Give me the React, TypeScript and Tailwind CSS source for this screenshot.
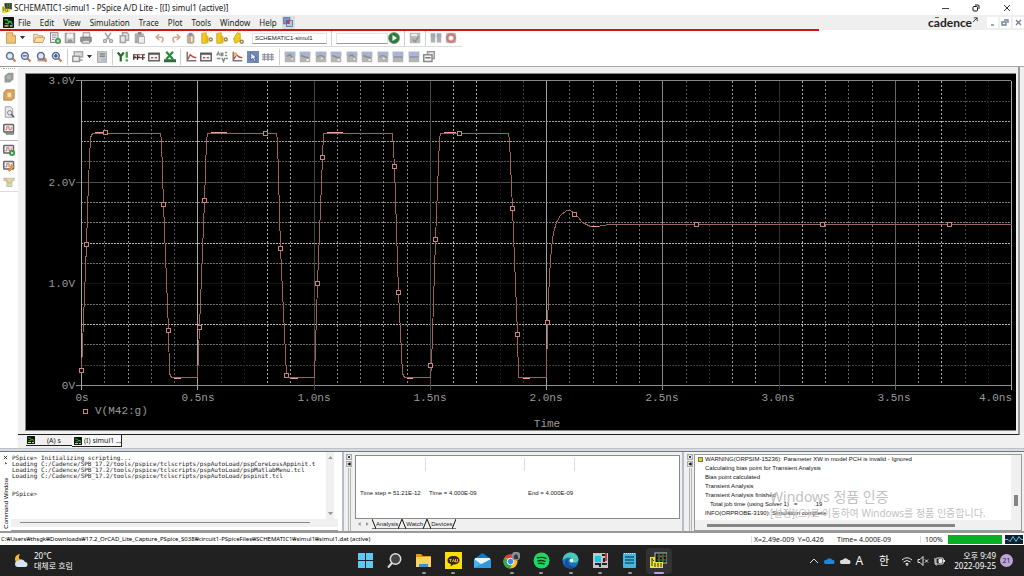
import type { ReactNode } from "react";

type IconProps = { name: string; className?: string };

const doc = <path d="M3 1h7l3 3v11H3z" fill="#e8e8e8" stroke="#888" />;
const lens = (
  <>
    <path d="M9 9l5 5" stroke="#d07a50" strokeWidth="3" />
    <circle cx="6.5" cy="6.5" r="4.5" fill="#dbe8f5" stroke="#5b6f93" strokeWidth="2" />
  </>
);
const marker = (
  <>
    <rect x="1" y="1" width="14" height="14" fill="#b4b4b4" />
    <rect x="1" y="1" width="14" height="6" fill="#a9b4d6" />
  </>
);
const scope = (
  <>
    <rect x="1" y="2" width="13" height="10" rx="1" fill="#f4f4f4" stroke="#666" strokeWidth="2" />
    <path d="M3 9h2V5h3v4h3V5" fill="none" stroke="#c24848" />
  </>
);
const axes = (
  <>
    <path d="M3 1v12h12" fill="none" stroke="#777" strokeWidth="2" />
    <path d="M4 11l3-6 4 3 4 1" fill="none" stroke="#c05050" strokeWidth="2" />
  </>
);

const icons: Record<string, ReactNode> = {
  new: (
    <>
      <path d="M2 1h8l4 4v10H2z" fill="#f0c37a" stroke="#b9853c" />
      <path d="M10 1v4h4" fill="#fff3d8" stroke="#b9853c" />
    </>
  ),
  open: (
    <>
      <path d="M1 14V3h5l1 2h6v3" fill="#f8e4c4" stroke="#b9854c" />
      <path d="M1 14l3-7h12l-3 7z" fill="#fbdca6" stroke="#b9854c" />
    </>
  ),
  newSim: (
    <>
      <rect x="2" y="1" width="10" height="13" fill="#eee" stroke="#666" />
      <path d="M4 4h6M4 7h6M4 10h3" stroke="#777" />
      <circle cx="12" cy="12" r="4" fill="#3b9a4b" />
      <path d="M12 10v4M10 12h4" stroke="#fff" />
    </>
  ),
  save: (
    <>
      <path d="M2 2h12v12H2z" fill="#d4d4d4" stroke="#9c9c9c" strokeWidth="2" />
      <path d="M4 2h8v6H4z" fill="#f4f4f4" />
      <path d="M5 10h6v4H5z" fill="#9c9c9c" />
    </>
  ),
  print: (
    <>
      <path d="M4 1h9v6H4z" fill="#eee" stroke="#777" />
      <path d="M1 7h14v6H1z" fill="#999" stroke="#666" />
      <path d="M3 11h10v4H3z" fill="#ddd" stroke="#777" />
    </>
  ),
  cut: (
    <g fill="none" stroke="#a5a5a5" strokeWidth="2">
      <path d="M4 1l6 9M12 1L6 10" />
      <circle cx="4" cy="12" r="2" />
      <circle cx="12" cy="12" r="2" />
    </g>
  ),
  copy: (
    <g fill="#e8e8e8" stroke="#a5a5a5" strokeWidth="2">
      <path d="M6 1h6l2 2v8H6z" />
      <path d="M3 5h7v9H3z" />
    </g>
  ),
  paste: (
    <>
      <rect x="1" y="2" width="12" height="13" fill="#aaa" />
      <rect x="5" y="0" width="5" height="3" fill="#888" />
      <path d="M6 6h8v9H6z" fill="#eee" stroke="#999" />
    </>
  ),
  undo: <path d="M7 3L3 7l4 4M3 7h6c4 0 4 4 1 7" fill="none" stroke="#cfa78a" strokeWidth="2" />,
  redo: <path d="M9 3l4 4-4 4M13 7H7c-4 0-4 4-1 7" fill="none" stroke="#cfa78a" strokeWidth="2" />,
  jar: (
    <>
      <rect x="3" y="3" width="9" height="12" rx="2" fill="#c9b083" stroke="#999" />
      <rect x="5" y="1" width="5" height="4" fill="#8090c0" />
      <path d="M9 6v7" stroke="#eee" strokeWidth="2" />
    </>
  ),
  cursorMax: (
    <>
      <path d="M1 2l6-1v14H1z" fill="#f4c81e" stroke="#c79d10" />
      <path d="M7 4l3 2v9H7z" fill="#e0b418" />
      <circle cx="13" cy="10" r="2" fill="none" stroke="#9c8a5a" strokeWidth="2" />
    </>
  ),
  cursorTilt: (
    <>
      <path d="M2 9l5-8 4 1v10l-7 3z" fill="#f4c81e" stroke="#c79d10" />
      <circle cx="13" cy="13" r="2" fill="none" stroke="#9c8a5a" strokeWidth="2" />
    </>
  ),
  run: (
    <>
      <circle cx="8" cy="8" r="7.5" fill="#2d7d3d" stroke="#8a9a8a" />
      <path d="M6 4l6 4-6 4z" fill="#fff" />
    </>
  ),
  check: (
    <>
      <rect x="1" y="1" width="14" height="14" rx="1" fill="#b8b8b8" />
      <path d="M3 4h8" stroke="#eee" strokeWidth="3" />
      <path d="M5 10l3 3 5-7" fill="none" stroke="#8b9d8b" strokeWidth="2" />
    </>
  ),
  pause: (
    <>
      <path d="M1 2h6v12H1zM9 2h6v12H9z" fill="#b0b0b4" />
      <path d="M1 2h6v5H1zM9 2h6v5H9z" fill="#a0a8bc" />
    </>
  ),
  stop: (
    <>
      <rect x="1" y="1" width="14" height="14" rx="3" fill="#bcbcbc" />
      <circle cx="8" cy="8" r="5" fill="#e0d0d0" stroke="#c97a7a" strokeWidth="3" />
      <rect x="6" y="6" width="4" height="4" fill="#fff" />
    </>
  ),
  zoomIn: lens,
  zoomOut: (
    <>
      {lens}
      <path d="M4 6.5h5" stroke="#5b6f93" strokeWidth="2" />
    </>
  ),
  zoomArea: (
    <>
      <path d="M2 9h12v5H2z" fill="#c7a08a" />
      {lens}
    </>
  ),
  zoomFit: (
    <>
      {lens}
      <path d="M4 6.5h5M6.5 4v5" stroke="#3c5c9c" strokeWidth="2" />
    </>
  ),
  tree: (
    <>
      <rect x="3" y="1" width="11" height="7" fill="#ddd" stroke="#aaa" strokeWidth="2" />
      <rect x="1" y="7" width="9" height="7" fill="#eee" stroke="#999" strokeWidth="2" />
      <path d="M10 12h4" stroke="#999" strokeWidth="2" />
    </>
  ),
  sheet: (
    <>
      <rect x="2" y="1" width="12" height="14" fill="#ccc" stroke="#999" />
      <path d="M5 4h7M5 7h7" stroke="#888" strokeWidth="2" />
      <rect x="7" y="9" width="7" height="5" fill="#b5bccd" />
    </>
  ),
  y: (
    <g fill="none" strokeWidth="3">
      <path d="M1 2l4 5 4-5M5 7v7" stroke="#256b2c" />
      <path d="M13 1v8M13 11v3" stroke="#40a040" />
    </g>
  ),
  fft: (
    <path
      d="M1 12V5h4M1 8h3M6 12V5h4M6 8h3M11 5h5M13 5v7M0 9h16"
      fill="none"
      stroke="#4d2a2a"
      strokeWidth="1.6"
    />
  ),
  table: (
    <>
      <rect x="1" y="3" width="14" height="10" fill="#f4f4f4" stroke="#666" strokeWidth="2" />
      <path d="M1 4h14" stroke="#555" strokeWidth="2" />
      <path d="M4 9h3M9 9h3" stroke="#b06060" strokeWidth="2" />
    </>
  ),
  excel: (
    <>
      <path d="M3 1l9 10M12 1L3 11" stroke="#2b8a3e" strokeWidth="3" />
      <rect x="0" y="11" width="16" height="4" fill="#2d6b38" />
    </>
  ),
  axes,
  axesAdd: (
    <>
      {axes}
      <circle cx="6" cy="4" r="2.5" fill="#e8b84c" />
    </>
  ),
  abc: (
    <path
      d="M1 6l2-4 2 4M7 2v4h2V2M12 2h3M12 6h3M1 10h5M8 9l2 5 2-5M13 10h3"
      fill="none"
      stroke="#8a8a8a"
      strokeWidth="2"
    />
  ),
  pointer: (
    <>
      <rect width="16" height="16" fill="#7088bc" />
      <path d="M5 2v10l3-2 2 4 2-1-2-4h3z" fill="#eef2ff" stroke="#3c5088" />
    </>
  ),
  grid: (
    <path
      d="M0 5h16M0 8h16M0 11h16M3 3v10M8 3v10M13 3v10"
      stroke="#84899a"
      strokeWidth="1.5"
    />
  ),
  peak: (
    <>
      {marker}
      <path d="M4 7l4-2 4 5" fill="none" stroke="#8c8c8c" strokeWidth="2" />
      <rect x="10" y="9" width="2" height="3" fill="#e8e8e8" />
    </>
  ),
  trough: (
    <>
      {marker}
      <path d="M3 6l5 2 5 1" fill="none" stroke="#8c8c8c" strokeWidth="2" />
      <rect x="10" y="11" width="3" height="2" fill="#fff" />
    </>
  ),
  slope: (
    <>
      {marker}
      <path d="M3 9c2-4 7-4 10 0" fill="none" stroke="#969696" strokeWidth="2" />
      <rect x="8" y="9" width="2" height="2" fill="#fff" />
    </>
  ),
  flat: (
    <>
      {marker}
      <path d="M2 8h12" stroke="#8d94a8" strokeWidth="2" />
    </>
  ),
  label: (
    <>
      <path d="M6 1h9v9H6z" fill="#eee" stroke="#999" strokeWidth="2" />
      <rect x="1" y="5" width="11" height="9" fill="#f5f5f5" stroke="#8a8a8a" strokeWidth="2" />
      <path d="M3 9h7" stroke="#777" strokeWidth="2" />
    </>
  ),
  blob: (
    <>
      <path d="M2 5l5-4h7v9l-5 4H2z" fill="#9a9a9a" />
      <circle cx="8" cy="7" r="3" fill="#a9b8a9" />
    </>
  ),
  book: (
    <>
      <path d="M4 1h11v11l-3 3H1V5z" fill="#dba255" stroke="#a98050" />
      <rect x="6" y="5" width="5" height="6" fill="#f6e3bc" />
    </>
  ),
  preview: (
    <>
      {doc}
      <circle cx="9" cy="9" r="3" fill="#dce6f0" stroke="#667" />
      <path d="M11 11l4 4" stroke="#556" strokeWidth="2" />
    </>
  ),
  scopeWatch: (
    <>
      {scope}
      <path d="M4 12h10v3H4z" fill="#999" stroke="#666" />
    </>
  ),
  scopeRun: (
    <>
      {scope}
      <circle cx="12" cy="12" r="4" fill="#2f9a45" />
      <path d="M11 10l3 2-3 2z" fill="#fff" />
    </>
  ),
  scopeEdit: (
    <>
      {scope}
      <path d="M7 14l6-7 2 2-6 6z" fill="#f2a83a" stroke="#b87820" />
    </>
  ),
  filter: (
    <>
      <path d="M1 3h14v3l-3 1v7H5V7L1 6z" fill="#d8d6bc" stroke="#b4b4b4" />
      <path d="M3 3l5 7 5-4" fill="none" stroke="#d8c65c" strokeWidth="2" />
    </>
  ),
  pspice: (
    <>
      <rect width="16" height="16" rx="1" fill="#111" />
      <path d="M2 4h4l2 3h5M3 9l4 1 3-4 4 5" fill="none" stroke="#2fae4a" strokeWidth="2" />
      <path d="M2 13h6" stroke="#e8d33a" strokeWidth="2" />
      <path d="M10 13h4" stroke="#ccc" strokeWidth="2" />
    </>
  ),
  app: (
    <>
      <rect x="4" y="0" width="12" height="10" fill="#333" stroke="#999" />
      <path d="M6 3h8M6 6h8M9 1v8M12 1v8" stroke="#3f8a3f" />
      <path d="M0 5h5v4h8v5H8v2H0z" fill="#e8df3a" />
      <path d="M2 6v7M4 9l3 5M9 10v4" stroke="#443f10" />
    </>
  ),
  cascade: (
    <>
      <rect x="1" y="1" width="9" height="9" fill="#7a97cf" stroke="#3b5fa5" />
      <rect x="5" y="5" width="9" height="9" fill="#b9c8ea" stroke="#3b5fa5" />
      <rect x="5" y="5" width="5" height="5" fill="#c23f3f" />
    </>
  ),
};

function Icon({ name, className = "size-3" }: IconProps) {
  return (
    <svg viewBox="0 0 16 16" className={`block shrink-0 ${className}`} aria-hidden="true">
      {icons[name]}
    </svg>
  );
}

function Tools({ names, className = "" }: { names: string[]; className?: string }) {
  return (
    <div className={`flex shrink-0 items-center justify-between ${className}`}>
      {names.map((name, i) => (
        <button key={i} type="button" aria-label={name}>
          <Icon name={name} />
        </button>
      ))}
    </div>
  );
}

function Separator() {
  return <div className="mx-1 h-4 w-px shrink-0 bg-[#cfcfcf]" />;
}

function Caret() {
  return (
    <svg viewBox="0 0 6 4" className="w-[5px] shrink-0" aria-hidden="true">
      <path d="M0 0h6L3 4z" fill="#333" />
    </svg>
  );
}

function TitleBar() {
  return (
    <header className="flex h-[15px] shrink-0 items-center bg-white pl-[2px] text-[8px] leading-none text-[#111]">
      <Icon name="app" className="size-[10px]" />
      <h1 className="ml-[2px] whitespace-nowrap">SCHEMATIC1-simul1 - PSpice A/D Lite - [(I) simul1 (active)]</h1>
      <div className="ml-auto flex gap-[23px] pr-[13px]">
        <button type="button" aria-label="Minimize">
          <svg viewBox="0 0 8 8" className="size-2">
            <path d="M1 4.5h7" stroke="#444" />
          </svg>
        </button>
        <button type="button" aria-label="Restore">
          <svg viewBox="0 0 8 8" className="size-2" fill="none" stroke="#111">
            <rect x="1" y="2.5" width="4.5" height="4.5" rx="1" />
            <path d="M3 1h3q1 0 1 1v3" />
          </svg>
        </button>
        <button type="button" aria-label="Close">
          <svg viewBox="0 0 8 8" className="size-2">
            <path d="M1 1l6 6M7 1L1 7" stroke="#333" />
          </svg>
        </button>
      </div>
    </header>
  );
}

const menus = ["File", "Edit", "View", "Simulation", "Trace", "Plot", "Tools", "Window", "Help"];

function MenuBar() {
  return (
    <nav className="relative z-10 flex h-[15px] shrink-0 items-center bg-[#efefef] pl-[3px] text-[8px] leading-none">
      <Icon name="pspice" className="size-[11px]" />
      <div className="ml-1 flex gap-[9px]">
        {menus.map((menu) => (
          <button key={menu} type="button">
            {menu}
          </button>
        ))}
      </div>
      <button type="button" aria-label="Cascade windows" className="ml-[5px] bg-[#dcdcdc] p-px">
        <Icon name="cascade" className="size-[11px]" />
      </button>
      <div className="ml-auto flex items-center gap-[15px]">
        <span className="relative font-['Lato'] text-[12px] font-bold leading-none text-[#222]">
          c<span className="relative">a<i className="absolute inset-x-px top-[2px] h-px bg-[#e0343c]" /></span>dence
          <svg viewBox="0 0 6 6" className="absolute -right-[6px] top-0 size-[5px]" fill="none" stroke="#222">
            <path d="M0 6l5-5M1 1h4v4" />
          </svg>
        </span>
        <div className="flex gap-[2px]">
          {["M4 8h3", "M4 3h4v3M2 5h4v3H2z", "M3 3l5 5M8 3L3 8"].map((d, i) => (
            <button key={d} type="button" aria-label={["Minimize", "Restore", "Close"][i] + " document"} className="bg-white">
              <svg viewBox="0 0 11 11" className="size-[11px]" fill="none" stroke="#71839a" strokeWidth="1.4">
                <path d={d} />
              </svg>
            </button>
          ))}
        </div>
      </div>
      <div className="absolute -bottom-px left-0 h-[2px] w-4/5 bg-[#d41414]" />
    </nav>
  );
}

function Toolbars() {
  return (
    <div className="shrink-0 bg-white">
      <div className="flex h-[17px] w-[462px] items-center border-b border-[#dcdcdc] pl-[5px]">
        <Tools names={["new"]} className="mr-[3px]" />
        <Caret />
        <Tools names={["open", "newSim", "save", "print"]} className="ml-2 w-[59px]" />
        <Tools names={["cut", "copy", "paste"]} className="ml-[10px] w-[44px]" />
        <Tools
          names={["undo", "redo", "jar", "cursorMax", "cursorMax", "cursorTilt"]}
          className="ml-2 w-[90px]"
        />
        <input
          aria-label="Simulation profile"
          defaultValue="SCHEMATIC1-simul1"
          className="ml-2 h-[11px] w-[75px] border border-[#e4e4e4] border-b-[#999] pl-[2px] font-['Liberation_Sans'] text-[6px] leading-none"
        />
        <Separator />
        <input
          aria-label="Search"
          className="h-[11px] w-[52px] border border-[#e4e4e4] border-b-[#999] text-[6px]"
        />
        <Tools names={["run"]} />
        <Separator />
        <Tools names={["check"]} />
        <Separator />
        <Tools names={["pause", "stop"]} className="w-[27px]" />
      </div>
      <div className="flex h-[19px] items-center pl-[5px]">
        <Tools names={["zoomIn", "zoomOut", "zoomArea", "zoomFit"]} className="w-[58px]" />
        <Separator />
        <Tools names={["tree"]} className="mr-[3px]" />
        <Caret />
        <Tools names={["sheet"]} className="ml-1" />
        <Separator />
        <Tools names={["y", "fft", "table", "excel"]} className="w-[59px]" />
        <Separator />
        <Tools names={["axes", "table", "abc", "axesAdd", "pointer", "grid"]} className="mr-px w-[89px]" />
        <Separator />
        <Tools
          names={["peak", "trough", "slope", "trough", "peak", "trough", "slope", "flat", "flat", "label"]}
          className="w-[151px]"
        />
      </div>
    </div>
  );
}

function SideBar() {
  return (
    <aside className="flex w-[18px] shrink-0 flex-col border-t border-[#999] bg-white">
      <div className="mx-[3px] mt-px border-t border-dotted border-[#aaa]" />
      <div className="flex flex-col items-center gap-[5px] border-b border-[#bbb] pb-[5px] pt-[3px]">
        <Tools names={["blob"]} />
        <Tools names={["book"]} />
        <Tools names={["preview"]} />
        <Tools names={["scopeWatch"]} />
      </div>
      <div className="flex flex-col items-center gap-1 border-b border-[#ddd] py-[3px]">
        <Tools names={["scopeRun"]} />
        <Tools names={["scopeEdit"]} />
        <Tools names={["filter"]} />
      </div>
    </aside>
  );
}

// plot geometry: one volt is 102 units high, 0.5 ns is 116.25 units wide
const rows = [
  { y: 80, c: "#858585", major: true },
  { y: 101, c: "#454545" },
  { y: 121, c: "#a0a0a0" },
  { y: 141, c: "#a0a0a0" },
  { y: 161, c: "#555555" },
  { y: 182, c: "#4c4c4c", major: true },
  { y: 202, c: "#808080" },
  { y: 222, c: "#808080" },
  { y: 243, c: "#b8b8b8" },
  { y: 263, c: "#707070" },
  { y: 283, c: "#161616", major: true },
  { y: 304, c: "#707070" },
  { y: 324, c: "#b8b8b8" },
  { y: 344, c: "#707070" },
  { y: 365, c: "#3c3c3c" },
  { y: 385, c: "#8e8e8e", major: true },
];

const shades = [
  "#a8a8a8", "#666666", "#8a8a8a", "#666666", "#555555",
  "#a8a8a8", "#3a3a3a", "#1c1c1c", "#b0b0b0", "#a0a0a0",
  "#444444", "#888888", "#808080", "#888888", "#909090",
  "#484848", "#b0b0b0", "#b0b0b0", "#1c1c1c", "#444444",
  "#a0a0a0", "#666666", "#777777", "#777777", "#777777",
  "#888888", "#555555", "#333333", "#999999", "#a0a0a0",
  "#303030", "#b0b0b0", "#888888", "#666666", "#777777",
  "#666666", "#888888", "#b0b0b0", "#444444", "#1c1c1c",
  "#a8a8a8",
];

const trace =
  "M81 370L83 320L86 244L88 180L90 137L92 133L160 133L161 140L163 204L168 330L169 373L171 377L197 377" +
  "L199 327L204 200L206 140L207 133H276L277 140L280 248L286 375L288 377L314 377" +
  "L317 283L322 157L323 133H392L394 166L398 292L402 373L404 377L430 377" +
  "L431 365L435 239L439 138L440 133H508L509 140L512 208L517 334L518 377L546 377" +
  "L547 322L549 275L551 247L553 232L556 222L560 215L566 210L570 210L574 213L577 216L582 222L590 226H597L608 224H1011";

const highlights =
  "M94 132H103M210 132H226M326 132H342M443 132H455M173 378H180M290 378H297M406 378H412M522 378H529M590 226H598";

const points = [
  [81, 370], [86, 244], [105, 132], [163, 204], [168, 330], [199, 327], [204, 200], [265, 133],
  [280, 248], [286, 375], [317, 283], [322, 157], [394, 166], [398, 292], [430, 365], [435, 239],
  [459, 133], [512, 208], [517, 334], [547, 322], [574, 214], [696, 224], [822, 224], [949, 224],
];

function Plot() {
  return (
    <svg viewBox="26 74 990 356" className="block min-h-0 w-full flex-1 bg-black" role="img" aria-label="V(M42:g) over time">
      <g shapeRendering="crispEdges">
        {rows.map(({ y, c, major }) => (
          <line
            key={y}
            x1={major && y !== 283 ? 76 : 81}
            x2="1011"
            y1={y + 0.5}
            y2={y + 0.5}
            stroke={c}
            strokeDasharray={major ? undefined : "2 1"}
          />
        ))}
        {shades.map((c, i) => {
          const x = Math.round(81 + i * 23.25) + 0.5;
          const major = i % 5 === 0;
          return (
            <line
              key={i}
              x1={x}
              x2={x}
              y1="81"
              y2={major ? 390 : 385}
              stroke={c}
              strokeDasharray={major ? undefined : "2 2"}
            />
          );
        })}
      </g>
      <g transform="translate(0.5 0.5)" fill="none" shapeRendering="crispEdges">
        <path d={trace} stroke="#9c625f" />
        <path d={highlights} stroke="#f0a09c" />
      </g>
      {points.map(([x, y]) => (
        <rect key={x} x={x - 1.5} y={y - 1.5} width="4" height="4" fill="#000" stroke="#cc8480" />
      ))}
      <g fill="#9a9a9a" fontFamily="'Liberation Mono', monospace" fontSize="11">
        {["3.0V", "2.0V", "1.0V", "0V"].map((label, i) => (
          <text key={label} x="75" y={84 + i * 102 - (i > 1 ? 1 : 0)} textAnchor="end">
            {label}
          </text>
        ))}
        {["0s", "0.5ns", "1.0ns", "1.5ns", "2.0ns", "2.5ns", "3.0ns", "3.5ns"].map((label, i) => (
          <text key={label} x={82 + i * 116} y="401" textAnchor="middle">
            {label}
          </text>
        ))}
        <text x="1012" y="401" textAnchor="end">
          4.0ns
        </text>
        <text x="95" y="414">
          V(M42:g)
        </text>
        <text x="547" y="427" textAnchor="middle">
          Time
        </text>
      </g>
      <rect x="83.5" y="409.5" width="4" height="4" fill="none" stroke="#cc8480" />
    </svg>
  );
}

function PlotWindow() {
  return (
    <main className="flex min-h-0 flex-1 flex-col border-t border-[#a8a8a8] bg-[#f0f0f0]">
      <div className="mr-1 flex min-h-0 flex-1 flex-col border-b border-r-2 border-b-[#222] border-r-[#999] pb-[3px] pl-[7px] pr-[2px] pt-[6px]">
        <div className="flex min-h-0 flex-1 flex-col border-b border-l border-t border-[#888]">
          <Plot />
        </div>
      </div>
      <div role="tablist" className="flex h-[13px] shrink-0 pl-2 text-[7px] leading-none">
        <button
          type="button"
          role="tab"
          aria-selected="false"
          className="flex h-[11px] w-[46px] items-center gap-3 border-b border-[#222] pl-px"
        >
          <Icon name="pspice" className="size-2" />
          (A) s
        </button>
        <button
          type="button"
          role="tab"
          aria-selected="true"
          className="flex h-3 w-[50px] items-center gap-[2px] whitespace-nowrap border-b border-r border-[#222] bg-[#f8f8f8] pl-[2px]"
        >
          <Icon name="pspice" className="size-2" />
          (I) simul1 ...
        </button>
      </div>
    </main>
  );
}

function PanelGrip() {
  return (
    <div className="flex w-2 shrink-0 flex-col items-center gap-px pt-[2px]">
      {["M1 1l3 3M4 1L1 4", "M4 1L1 2.5 4 4z"].map((d, i) => (
        <button key={d} type="button" aria-label={i ? "Collapse panel" : "Close panel"} className="border border-[#aaa] bg-[#eee]">
          <svg viewBox="0 0 5 5" className="size-1">
            <path d={d} stroke="#111" />
          </svg>
        </button>
      ))}
      <div className="w-[3px] flex-1 border-x border-[#b5b5b5]" />
    </div>
  );
}

function CommandPanel() {
  return (
    <section className="flex min-w-0 border-r-2 border-[#b7bccb] bg-white pr-1">
      <div className="flex w-[11px] shrink-0 flex-col items-center pt-[3px]">
        <svg viewBox="0 0 6 12" className="w-[5px]" aria-hidden="true">
          <path d="M1 1l4 4M5 1L1 5M3 9l1 1-1 1" stroke="#111" />
        </svg>
        <h2 className="mb-[2px] mt-auto rotate-180 whitespace-nowrap font-['Liberation_Sans'] text-[6px] leading-none text-black [writing-mode:vertical-rl]">
          Command Window
        </h2>
      </div>
      <div className="flex min-w-0 flex-1 flex-col border-b border-[#999]">
        <div className="flex min-h-0 flex-1">
          <pre className="min-w-0 flex-1 overflow-hidden pl-px pt-[3px] font-['DejaVu_Sans_Mono'] text-[6px] leading-[6px] text-[#222]">
            {`PSpice> Initializing scripting...
Loading C:/Cadence/SPB_17.2/tools/pspice/tclscripts/pspAutoLoad/pspCoreLossAppinit.t
Loading C:/Cadence/SPB_17.2/tools/pspice/tclscripts/pspAutoLoad/pspMatlabMenu.tcl
Loading C:/Cadence/SPB_17.2/tools/pspice/tclscripts/pspAutoLoad/pspinit.tcl


PSpice>`}
          </pre>
          <div className="mr-1 flex w-2 shrink-0 flex-col items-center justify-between bg-[#f0f0f0] py-1">
            <svg viewBox="0 0 6 4" className="w-[5px]">
              <path d="M0 4h6L3 0z" fill="#999" />
            </svg>
            <svg viewBox="0 0 6 4" className="w-[5px]">
              <path d="M0 0h6L3 4z" fill="#999" />
            </svg>
          </div>
        </div>
        <div className="mb-[3px] h-2 shrink-0 bg-[#f0f0f0] pl-[9px] pr-[28px] pt-[3px]">
          <div className="h-px bg-[#8a8a8a]" />
        </div>
      </div>
    </section>
  );
}

function AnalysisPanel() {
  return (
    <section className="flex min-w-0 border-r-2 border-[#b7bccb] bg-[#f0f0f0] pl-px pr-[2px] font-['Liberation_Sans'] text-[6px] leading-none">
      <PanelGrip />
      <div className="ml-[2px] mt-[3px] flex min-w-0 flex-1 flex-col">
        <div className="min-h-0 flex-1 border border-[#8a8a8a] bg-white">
          <div className="flex h-[15px]">
            <div className="mt-[2px] w-[70px] border-r border-[#ddd]" />
            <div className="mt-[2px] w-[99px] border-r border-[#ddd]" />
            <div className="mt-[2px] w-[50px] border-r border-[#ddd]" />
          </div>
          <div className="mt-[19px] flex pl-1 text-[#222]">
            <span className="w-[69px]">Time step = 51.21E-12</span>
            <span className="w-[99px]">Time = 4.000E-09</span>
            <span>End = 4.000E-09</span>
          </div>
        </div>
        <div role="tablist" className="flex h-3 shrink-0 items-start">
          <span className="flex w-[17px] justify-around pt-[3px]">
            <svg viewBox="0 0 4 6" className="h-1">
              <path d="M4 0v6L0 3z" fill="#999" />
            </svg>
            <svg viewBox="0 0 4 6" className="h-1">
              <path d="M0 0v6l4-3z" fill="#999" />
            </svg>
          </span>
          {["Analysis", "Watch", "Devices"].map((tab, i) => (
            <button
              key={tab}
              type="button"
              role="tab"
              aria-selected={i === 0}
              className="flex h-[10px] items-center border-b border-[#777]"
            >
              <svg viewBox="0 0 4 10" className="h-[10px]">
                <path d="M0 0l4 10" stroke="#111" />
              </svg>
              {tab}
              <svg viewBox="0 0 4 10" className="h-[10px]">
                <path d="M4 0L0 10" stroke="#111" />
              </svg>
            </button>
          ))}
        </div>
      </div>
    </section>
  );
}

const log = [
  "WARNING(ORPSIM-15236): Parameter XW in model PCH is invalid - Ignored",
  "Calculating bias point for Transient Analysis",
  "Bias point calculated",
  "Transient Analysis",
  "Transient Analysis finished",
  "   Total job time (using Solver 1)   =          .19",
  "INFO(ORPROBE-3190): Simulation complete",
];

function OutputPanel() {
  return (
    <section className="relative flex min-w-0 bg-[#f0f0f0] pl-[2px] pr-[2px]">
      <PanelGrip />
      <div className="mt-[2px] flex min-w-0 flex-1 flex-col border border-[#999]">
        <div className="flex min-h-0 flex-1">
          <ul className="min-w-0 flex-1 overflow-hidden whitespace-pre bg-white pl-1 font-['Liberation_Sans'] text-[6px] leading-[9px] text-[#111]">
            {log.map((line, i) => (
              <li key={line} className="flex items-center gap-[3px]">
                <span className={i === 0 ? "size-[3px] bg-[#e6d800] outline outline-[#776]" : "size-[3px]"} />
                {line}
              </li>
            ))}
          </ul>
          <div className="flex w-[10px] shrink-0 flex-col items-center justify-end pb-[14px]">
            <div className="h-[11px] w-1 bg-[#858585]" />
          </div>
        </div>
        <div className="flex h-[10px] shrink-0 items-center pl-3">
          <div className="h-[3px] w-[79%] bg-[#858585]" />
        </div>
      </div>
      <div className="pointer-events-none absolute left-[86px] top-[37px] whitespace-nowrap text-[#c2c2c2]">
        <p className="text-[14px] leading-4">Windows 정품 인증</p>
        <p className="text-[10px] leading-4">[설정](으)로 이동하여 Windows를 정품 인증합니다.</p>
      </div>
    </section>
  );
}

function StatusBar() {
  return (
    <footer className="flex h-3 shrink-0 items-center bg-white px-px text-[7px] leading-none text-[#222]">
      <span className="whitespace-nowrap text-[6px] text-black">
        C:₩Users₩thsgk₩Downloads₩17.2_OrCAD_Lite_Capture_PSpice_S038₩circuit1-PSpiceFiles₩SCHEMATIC1₩simul1₩simul1.dat (active)
      </span>
      <span className="ml-auto w-[86px] whitespace-pre border-l border-[#ddd] pl-[2px]">X=2.49e-009  Y=0.426</span>
      <span className="w-[83px]">Time= 4.000E-09</span>
      <span className="w-7 border-l border-[#ddd] pl-1">100%</span>
      <span className="h-[9px] w-[54px] bg-[#06b025]" />
      <svg viewBox="0 0 18 8" className="ml-[3px] h-[9px] w-[18px] bg-[#10202c]" fill="none" stroke="#5fc4ea">
        <path d="M0 4h3l2 2 3-5 3 5 3-5 2 3h2" />
      </svg>
    </footer>
  );
}

const apps: { name: string; art: ReactNode; open?: boolean; active?: boolean }[] = [
  {
    name: "Start",
    art: <path d="M1 1h7v7H1zM9 1h7v7H9zM1 9h7v7H1zM9 9h7v7H9z" fill="#5cc8f5" />,
  },
  {
    name: "Search",
    art: (
      <>
        <circle cx="9.5" cy="7" r="5.2" fill="#444" stroke="#ddd" strokeWidth="1.5" />
        <path d="M6 11l-4 4.5" stroke="#ddd" strokeWidth="2" />
      </>
    ),
  },
  {
    name: "File Explorer",
    open: true,
    art: (
      <>
        <path d="M1 2h5l2 2h8v4H1z" fill="#d99a1e" />
        <path d="M1 5h15v10H1z" fill="#fbd25b" />
        <path d="M4 12h9v3H4z" fill="#3f8fd8" />
      </>
    ),
  },
  {
    name: "KakaoTalk",
    open: true,
    art: (
      <>
        <rect x="0" y="0" width="17" height="17" fill="#fae100" />
        <path d="M8.5 4c4 0 6 2 6 4.2s-2 4.3-6 4.3l-3 2 .5-2.5C3.5 11.5 2.5 10 2.5 8.2 2.5 6 4.5 4 8.5 4z" fill="#3a2420" />
        <path d="M4.5 7.5h2M5.5 7.5v2.5M7.5 10l1-2.5 1 2.5M10.5 7v3h1.5M12.5 7v3" fill="none" stroke="#fae100" strokeWidth=".8" />
      </>
    ),
  },
  {
    name: "Mail",
    art: (
      <>
        <path d="M0 7l8.5-6L17 7v9H0z" fill="#1377c8" />
        <path d="M1 6h15v2l-7.5 6L1 8z" fill="#e8f3fb" />
        <path d="M0 7l8.5 6L0 16z" fill="#4cb2ee" />
        <path d="M17 7L0 16h17z" fill="#2f98df" />
      </>
    ),
  },
  {
    name: "Chrome",
    open: true,
    art: (
      <>
        <circle cx="7.5" cy="9.5" r="7" fill="#fbc116" />
        <path d="M1.4 6A7 7 0 0 1 14 7H7.5z" fill="#e33b2e" />
        <path d="M1.4 6A7 7 0 0 0 7 16.5L10 11z" fill="#2da94f" />
        <circle cx="7.5" cy="9.5" r="3.3" fill="#4285f4" stroke="#fff" />
        <circle cx="13" cy="4" r="4.5" fill="#8a8f96" />
        <path d="M10.5 5l2-3 2 1 1 4h-4z" fill="#33383f" />
      </>
    ),
  },
  {
    name: "Spotify",
    open: true,
    art: (
      <>
        <circle cx="8.5" cy="8.5" r="8" fill="#1ed760" />
        <path d="M4 6q5-1.5 9.5.7M4.5 9q4-1.2 8 .6M5 11.7q3-1 6.5.5" fill="none" stroke="#18351f" strokeWidth="1.4" />
      </>
    ),
  },
  {
    name: "Edge",
    open: true,
    art: (
      <>
        <circle cx="8.5" cy="8.5" r="8" fill="#1473c8" />
        <path d="M.6 8C1 3 5 .5 8.5.5c5 0 8 3.5 8 7 0 3-4 4-6.5 2.5 1.5-3-1-5-4-4.5C3.5 6 1 8 .6 8z" fill="#47c9b2" />
        <path d="M6 9c0 4 4 6 8.5 5-4 4.5-10 3-11.5-1C2 9.5 4 7 7 6.5 6.5 7 6 8 6 9z" fill="#1a4f9e" />
        <circle cx="9.5" cy="8.5" r="2" fill="#e8f6ff" />
      </>
    ),
  },
  {
    name: "OrCAD Capture",
    open: true,
    art: (
      <>
        <rect x="1" y="1" width="15" height="15" fill="#c4c4c4" />
        <rect x="3" y="4" width="6" height="6" fill="#17c7e8" />
        <path d="M10 3h5M12 6v4M3 12h5v3M10 12h5" fill="none" stroke="#222" strokeWidth="2" />
        <path d="M14 1v8" stroke="#e0303c" strokeWidth="2" />
      </>
    ),
  },
  {
    name: "Notepad",
    open: true,
    art: (
      <>
        <rect x="2" y="1" width="13" height="15" rx="1" fill="#48b5dc" />
        <path d="M4 5h9M4 8h9M4 11h9" stroke="#16557a" strokeWidth="1.4" />
        <path d="M3 1.5h11" stroke="#c9eefb" strokeDasharray="1 1" />
      </>
    ),
  },
  {
    name: "PSpice",
    open: true,
    active: true,
    art: (
      <>
        <rect x="5" y="1" width="12" height="10" fill="#161616" stroke="#bbb" />
        <path d="M7 4h9M7 8h9M9 2v8M13 2v8" stroke="#2f8f3f" />
        <path d="M8 7l3-3 3 4" fill="none" stroke="#d84040" />
        <path d="M0 5h5v5h8v6H0z" fill="#eee33c" />
        <path d="M2 6v8M2 7l2 2M5 11v4M8 11v4M10 12h2M10 14h2" stroke="#333010" />
      </>
    ),
  },
];

function Taskbar() {
  return (
    <footer className="grid h-[31px] shrink-0 grid-cols-[1fr_320px_1fr] items-center bg-[#212121] text-white">
      <button type="button" className="flex items-center gap-[6px] pl-[14px] text-left text-[8px] leading-[10px]">
        <svg viewBox="0 0 14 14" className="size-[14px]" aria-hidden="true">
          <path d="M6 0a5 5 0 1 0 4 8A5 5 0 0 1 6 0z" fill="#f5b52e" />
          <path d="M4 13a3 3 0 0 1 0-6 4 4 0 0 1 7 1 2.5 2.5 0 0 1 0 5z" fill="#d5e2f7" />
        </svg>
        <span>
          20°C
          <br />
          대체로 흐림
        </span>
      </button>
      <div className="flex justify-between">
        {apps.map(({ name, art, open, active }) => (
          <button
            key={name}
            type="button"
            aria-label={name}
            className={`relative flex h-[26px] w-[26px] items-center justify-center rounded-sm ${active ? "bg-[#323232]" : ""}`}
          >
            <svg viewBox="0 0 17 17" className="size-[17px]">
              {art}
            </svg>
            {open && (
              <span
                className={`absolute bottom-0 h-[2px] rounded-full ${active ? "w-[10px] bg-[#b9a3dc]" : "w-1 bg-[#999]"}`}
              />
            )}
          </button>
        ))}
      </div>
      <div className="flex items-center justify-end pr-[11px]">
        <svg viewBox="0 0 10 10" className="size-[10px]" fill="none" stroke="#ddd">
          <path d="M1 7l4-4 4 4" />
        </svg>
        {["#1a86dc", "#dcdcdc"].map((c) => (
          <svg key={c} viewBox="0 0 12 8" className="ml-[5px] w-[11px]">
            <path d="M3 8a3 2.5 0 0 1 0-5 3.5 3.5 0 0 1 6 0 2.5 2.5 0 0 1 0 5z" fill={c} />
          </svg>
        ))}
        <span className="ml-[5px] font-['Open_Sans'] text-[12px] leading-none">A</span>
        <span className="ml-4 text-[11px] leading-none">한</span>
        <svg viewBox="0 0 12 12" className="ml-3 size-3" fill="none" stroke="#e8e8e8">
          <path d="M1 5q5-4.5 10 0M2.5 7q3.5-3 7 0M4.5 9q1.5-1.5 3 0" />
          <circle cx="6" cy="10" r=".6" />
        </svg>
        <svg viewBox="0 0 12 12" className="ml-1 size-3" fill="none" stroke="#e8e8e8">
          <path d="M1 4.5h2l3-3v9l-3-3H1zM8 4.5l3 3M11 4.5l-3 3" />
        </svg>
        <svg viewBox="0 0 12 12" className="ml-1 size-3" fill="none" stroke="#e8e8e8">
          <rect x="3" y="3" width="7.5" height="6" rx="1.5" />
          <path d="M6 4.5h3v3H6z" fill="#e8e8e8" />
          <path d="M2 3v5q0 2 2 2M11.5 5v2" />
        </svg>
        <div className="ml-[9px] text-right text-[8px] leading-[10px]">
          오후 9:49
          <br />
          2022-09-25
        </div>
        <span className="ml-1 flex size-[13px] items-center justify-center rounded-full bg-[#bfa3dc] text-[7px] leading-none text-[#222]">
          21
        </span>
      </div>
    </footer>
  );
}

export default function App() {
  return (
    <div className="flex h-screen flex-col overflow-hidden bg-white font-['Noto_Sans','Noto_Sans_CJK_KR',sans-serif] text-[#222]">
      <TitleBar />
      <MenuBar />
      <Toolbars />
      <div className="flex min-h-0 flex-1">
        <SideBar />
        <PlotWindow />
      </div>
      <div className="flex h-[85px] shrink-0 flex-col border-b-2 border-[#999]">
        <div className="h-1 shrink-0 border-b border-t border-b-[#777] border-t-[#c0c0c0] bg-[#d5dbe8]" />
        <div className="grid min-h-0 flex-1 grid-cols-[86fr_85fr_85fr]">
          <CommandPanel />
          <AnalysisPanel />
          <OutputPanel />
        </div>
      </div>
      <StatusBar />
      <Taskbar />
    </div>
  );
}
